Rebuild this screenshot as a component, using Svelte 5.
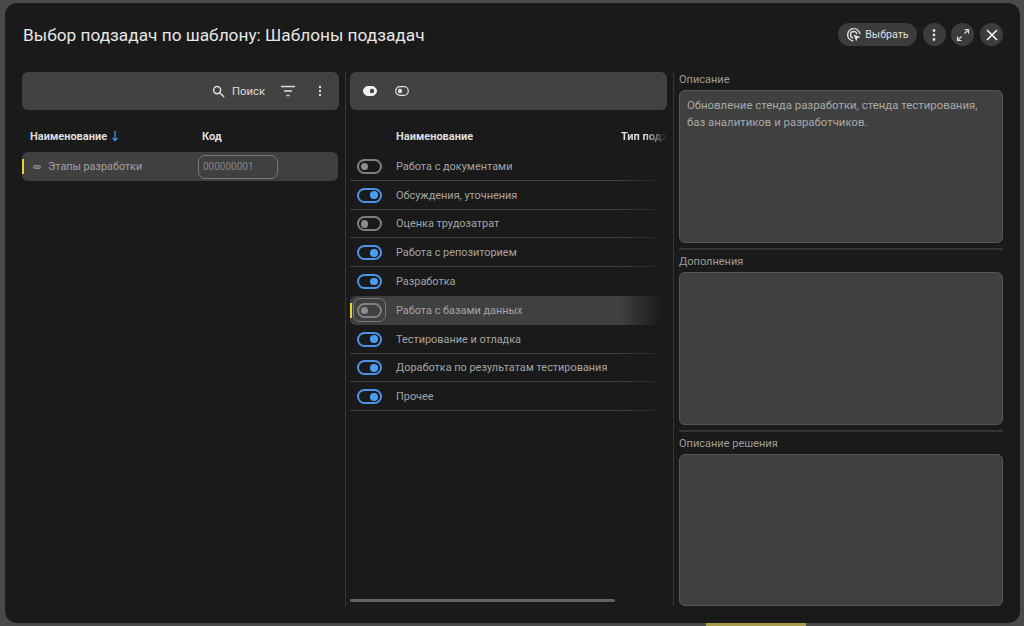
<script>
  const rows = [
    { t: 'Работа с документами', on: false, line: true },
    { t: 'Обсуждения, уточнения', on: true, line: true },
    { t: 'Оценка трудозатрат', on: false, line: true },
    { t: 'Работа с репозиторием', on: true, line: true },
    { t: 'Разработка', on: true, line: false },
    { t: 'Работа с базами данных', on: false, line: false, sel: true },
    { t: 'Тестирование и отладка', on: true, line: true },
    { t: 'Доработка по результатам тестирования', on: true, line: true },
    { t: 'Прочее', on: true, line: true }
  ];
  const fields = [
    { label: 'Описание', text: 'Обновление стенда разработки, стенда тестирования, баз аналитиков и разработчиков.' },
    { label: 'Дополнения', text: '' },
    { label: 'Описание решения', text: '' }
  ];
</script>

<div class="page">
  <i class="strip"></i>
  <div class="modal">
    <header class="head">
      <h1>Выбор подзадач по шаблону: Шаблоны подзадач</h1>
      <div class="actions">
        <button class="pill">
          <svg width="16" height="16" viewBox="0 0 16 16" fill="none" stroke="#ddd" stroke-width="1.400">
            <path d="M7.200 14A6.200 6.200 0 1 1 14 7.200" />
            <path d="M7.200 11A3.300 3.300 0 1 1 11 7.200" />
            <path d="M7.500 7.500l7 2.600-3 1.200-1.200 3z" fill="#ddd" stroke="none" />
          </svg>
          <span>Выбрать</span>
        </button>
        <button class="round" aria-label="Меню">
          <svg width="16" height="16" viewBox="0 0 16 16" fill="#ddd"><circle cx="8" cy="3.500" r="1.400" /><circle cx="8" cy="8" r="1.400" /><circle cx="8" cy="12.500" r="1.400" /></svg>
        </button>
        <button class="round" aria-label="Развернуть">
          <svg width="16" height="16" viewBox="0 0 16 16" fill="none" stroke="#ddd" stroke-width="1.200"><path d="M9.500 2.500h4V6.500M13.500 2.500L9.500 6.500M6.500 13.500H2.500V9.500M2.500 13.500L6.500 9.500" /></svg>
        </button>
        <button class="round" aria-label="Закрыть">
          <svg width="16" height="16" viewBox="0 0 16 16" fill="none" stroke="#eee" stroke-width="1.700"><path d="M3 3l10 10M13 3L3 13" /></svg>
        </button>
      </div>
    </header>

    <div class="body">
      <section class="left">
        <div class="toolbar end">
          <span class="search">
            <svg width="13" height="13" viewBox="0 0 14 14" fill="none" stroke="#ddd" stroke-width="1.600"><circle cx="5.500" cy="5.500" r="3.800" /><path d="M8.500 8.500L13 13" /></svg>
            Поиск
          </span>
          <svg class="filter" width="16" height="12" viewBox="0 0 16 12" stroke="#ddd" stroke-width="1.300"><path d="M1 1.500h14M4 6h8M6.500 10.500h3" /></svg>
          <svg class="dots" width="4" height="12" viewBox="0 0 4 12" fill="#ddd"><circle cx="2" cy="2" r="1.200" /><circle cx="2" cy="6" r="1.200" /><circle cx="2" cy="10" r="1.200" /></svg>
        </div>
        <div class="thead lefthead">
          <span class="c-name">Наименование <i class="arrow">
            <svg width="8" height="12" viewBox="0 0 8 12" fill="none" stroke="#3f93ee" stroke-width="1.300"><path d="M4 1v9.500M1.500 8L4 10.500 6.500 8" /></svg>
          </i></span>
          <span>Код</span>
        </div>
        <div class="lrow">
          <i class="mark"></i>
          <i class="minus"></i>
          <span class="lname">Этапы разработки</span>
          <span class="code">000000001</span>
        </div>
      </section>

      <section class="mid">
        <div class="toolbar">
          <svg width="14" height="10" viewBox="0 0 14 10"><rect x="0.500" y="0.500" width="13" height="9" rx="4.500" fill="#f2f2f2" stroke="#f2f2f2" /><circle cx="9" cy="5" r="2.200" fill="#444" /></svg>
          <svg class="off" width="14" height="10" viewBox="0 0 14 10"><rect x="0.700" y="0.700" width="12.600" height="8.600" rx="4.300" fill="none" stroke="#ddd" stroke-width="1.200" /><circle cx="5" cy="5" r="2.200" fill="#ddd" /></svg>
        </div>
        <div class="thead midhead">
          <span class="m-name">Наименование</span>
          <span class="m-type">Тип подзадачи</span>
        </div>
        <div class="rows">
          {#each rows as r}
            <div class="mrow" class:sel={r.sel} class:line={r.line}>
              {#if r.sel}<i class="mark"></i>{/if}
              <span class="switchbox" class:focus={r.sel}>
                <span class="switch" class:on={r.on}><i></i></span>
              </span>
              <span class="mtext">{r.t}</span>
            </div>
          {/each}
        </div>
        <div class="scroll"><i></i></div>
      </section>

      <section class="right">
        {#each fields as f, i}
          <div class="field" class:ruled={i > 0}>
            <label for={'f' + i}>{f.label}</label>
            <div class="area" id={'f' + i}>{f.text}</div>
          </div>
        {/each}
      </section>
    </div>
  </div>
</div>

<style>
  :global(body) {
    margin: 0;
    background: #4c4c4c;
  }
  * {
    box-sizing: border-box;
  }
  .page {
    width: 1024px;
    height: 626px;
    padding: 3px 4px 3px 5px;
    background: #4a4a4a;
    font-family: Roboto, 'Liberation Sans', sans-serif;
    overflow: hidden;
    position: relative;
  }
  .strip {
    position: absolute;
    left: 706px;
    bottom: 0;
    width: 100px;
    height: 5px;
    background: #a89b4c;
  }
  .modal {
    height: 620px;
    background: #1a1a1a;
    border-radius: 12px;
    padding: 0 17px;
    display: flex;
    flex-direction: column;
    position: relative;
  }
  .head {
    height: 69px;
    flex: none;
    display: flex;
    align-items: center;
    justify-content: space-between;
    padding-bottom: 6px;
  }
  h1 {
    margin: 0 0 0 1px;
    font-size: 17.250px;
    font-weight: 400;
    color: #e6e6e6;
  }
  .actions {
    display: flex;
    gap: 5.700px;
    align-items: center;
  }
  button {
    border: 0;
    background: #3c3c3c;
    color: #ddd;
    font-family: inherit;
    padding: 0;
    display: flex;
    align-items: center;
    justify-content: center;
  }
  .pill {
    width: 79px;
    height: 23px;
    border-radius: 12px;
    gap: 3px;
    font-size: 10.700px;
  }
  .round {
    width: 23px;
    height: 23px;
    border-radius: 50%;
  }
  .body {
    flex: 1;
    display: grid;
    grid-template-columns: 323px 328px 1fr;
    grid-template-rows: minmax(0, 1fr);
    min-height: 0;
    margin-bottom: 17px;
  }
  .toolbar {
    height: 38px;
    background: #424242;
    border-radius: 6px;
    display: flex;
    align-items: center;
    gap: 18px;
    padding: 0 13px;
    color: #ddd;
    font-size: 11.300px;
    flex: none;
  }
  .toolbar.end {
    justify-content: flex-end;
    width: 317px;
    padding-right: 17px;
  }
  .search {
    display: flex;
    align-items: center;
    gap: 7px;
    margin-right: -3px;
  }
  .dots {
    margin-left: 4px;
  }
  .thead {
    font-size: 11px;
    font-weight: 700;
    color: #dcdcdc;
    height: 42px;
    padding-top: 10px;
    display: flex;
    align-items: center;
  }
  .lefthead {
    padding-left: 8px;
  }
  .c-name {
    width: 172px;
    display: flex;
    align-items: center;
    gap: 3.500px;
  }
  .arrow {
    display: inline-flex;
  }
  .lrow {
    width: 316px;
    height: 29px;
    background: #404040;
    border-radius: 6px;
    display: flex;
    align-items: center;
    position: relative;
    font-size: 10.800px;
    color: #a0a0a0;
  }
  .mark {
    position: absolute;
    left: 0;
    top: 7px;
    width: 2px;
    height: 15px;
    background: #e6d32e;
  }
  .minus {
    width: 8px;
    height: 4px;
    border: 1px solid #858585;
    background: #6a6a6a;
    border-radius: 2px;
    margin-left: 11px;
  }
  .lname {
    margin-left: 7px;
    width: 150px;
  }
  .code {
    width: 80px;
    height: 24px;
    border: 1px solid #777;
    border-radius: 7px;
    display: flex;
    align-items: center;
    padding-left: 4px;
    color: #858585;
    font-size: 10px;
  }
  .mid {
    border-left: 1px solid #363636;
    padding: 0 6px 0 4px;
    overflow: hidden;
    display: flex;
    flex-direction: column;
  }
  .midhead {
    padding-left: 46px;
    flex: none;
  }
  .m-name {
    width: 225px;
    flex: none;
  }
  .m-type {
    white-space: nowrap;
    width: 46px;
    overflow: hidden;
    flex: none;
    -webkit-mask-image: linear-gradient(90deg, #000 50%, transparent 100%);
    mask-image: linear-gradient(90deg, #000 50%, transparent 100%);
  }
  .rows {
    flex: 1;
  }
  .mrow {
    height: 28.800px;
    padding-top: 1px;
    display: flex;
    align-items: center;
    position: relative;
    font-size: 10.900px;
    color: #a3a3a3;
    border-bottom: 1px solid transparent;
  }
  .mrow.line {
    border-image: linear-gradient(90deg, #3e3e3e 85%, #1a1a1a 100%) 1;
  }
  .mrow.sel {
    background: linear-gradient(90deg, #404040 0, #404040 85%, #1a1a1a 98%);
    border-radius: 6px 0 0 6px;
  }
  .switchbox {
    width: 33px;
    height: 24px;
    margin-left: 3px;
    border: 1px solid transparent;
    border-radius: 7px;
    display: flex;
    align-items: center;
    justify-content: center;
    flex: none;
  }
  .switchbox.focus {
    border-color: #777;
  }
  .switch {
    width: 25px;
    height: 15px;
    border: 2px solid #808080;
    border-radius: 8px;
    position: relative;
    display: block;
  }
  .switch i {
    position: absolute;
    left: 1.500px;
    top: 1.750px;
    width: 7.500px;
    height: 7.500px;
    border-radius: 50%;
    background: #8c8c8c;
  }
  .switch.on {
    border-color: #4b94ea;
  }
  .switch.on i {
    left: 11px;
    background: #4b9cf5;
  }
  .mtext {
    margin-left: 10px;
  }
  .scroll {
    height: 3px;
    flex: none;
    margin-bottom: 4px;
  }
  .scroll i {
    display: block;
    width: 265px;
    height: 3px;
    background: #626262;
    border-radius: 2px;
  }
  .right {
    border-left: 1px solid #363636;
    padding-left: 5px;
    display: flex;
    flex-direction: column;
    min-height: 0;
  }
  .field {
    display: flex;
    flex-direction: column;
    height: 177px;
    flex: none;
  }
  .field:first-child {
    height: 171px;
  }
  .field:last-child {
    flex: 1;
    height: auto;
    min-height: 0;
  }
  .field.ruled {
    border-top: 2px solid #333;
    margin-top: 5px;
  }
  label {
    font-size: 11px;
    color: #9c9c9c;
    height: 22px;
    flex: none;
    display: flex;
    align-items: center;
  }
  .field:first-child label {
    height: 18px;
    padding-bottom: 4px;
  }
  .area {
    flex: 1;
    background: #404040;
    border: 1px solid #555;
    border-radius: 6px;
    padding: 6px 7px;
    font-size: 11.400px;
    line-height: 17px;
    color: #a8a8a8;
  }
</style>
